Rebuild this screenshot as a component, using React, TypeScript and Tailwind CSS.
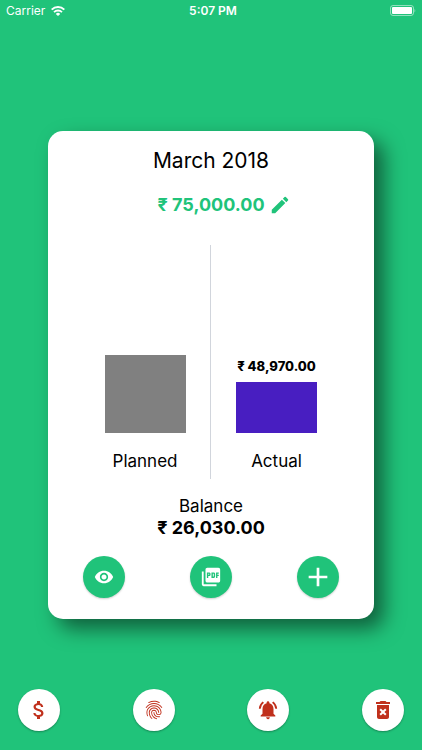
import {
  MdAdd,
  MdAttachMoney,
  MdDeleteForever,
  MdEdit,
  MdFingerprint,
  MdNotificationsActive,
  MdPictureAsPdf,
  MdVisibility,
} from 'react-icons/md';

const bars = [
  { label: 'Planned', amount: '', height: 78, color: 'bg-[#808080]' },
  { label: 'Actual', amount: '₹ 48,970.00', height: 51, color: 'bg-[#481ec1]' },
];

const cardActions = [
  { label: 'View expenses', icon: <MdVisibility size={20} /> },
  { label: 'Export PDF', icon: <MdPictureAsPdf size={22} /> },
  { label: 'Add expense', icon: <MdAdd size={32} /> },
];

const navActions = [
  { label: 'Currency', icon: <MdAttachMoney size={24} /> },
  { label: 'Fingerprint lock', icon: <MdFingerprint size={22} /> },
  { label: 'Reminders', icon: <MdNotificationsActive size={22} /> },
  { label: 'Delete all', icon: <MdDeleteForever size={24} /> },
];

function StatusBar() {
  return (
    <header className="grid h-[22px] grid-cols-3 items-center px-[6px] text-[12px] text-white">
      <div className="flex items-center gap-[6px]">
        <span>Carrier</span>
        <svg width="14" height="10" viewBox="0 0 14 10" fill="none" aria-label="Wi-Fi">
          <path d="M.7 3.6a9 9 0 0 1 12.6 0" stroke="currentColor" strokeWidth="2" />
          <path d="M3 6.1a5.8 5.8 0 0 1 8 0" stroke="currentColor" strokeWidth="1.8" />
          <path d="M7 10 4.8 7.9a3.2 3.2 0 0 1 4.4 0z" fill="currentColor" />
        </svg>
      </div>
      <span className="pl-1 text-center font-semibold">5:07 PM</span>
      <svg className="justify-self-end" width="26" height="12" viewBox="0 0 26 12" fill="none" aria-label="Battery full">
        <rect x="0.5" y="0.5" width="23" height="10" rx="2.5" stroke="#fff" strokeOpacity="0.5" />
        <rect x="2" y="2" width="20" height="7" rx="1" fill="#fff" />
        <path d="M24.5 4v3.5c1-.4 1.2-3.1 0-3.5z" fill="#fff" fillOpacity="0.5" />
      </svg>
    </header>
  );
}

export default function App() {
  return (
    <div className="flex min-h-screen flex-col bg-[#20c37a] font-['Inter','Noto_Sans',sans-serif] text-black">
      <StatusBar />

      <main className="flex flex-1 flex-col justify-center px-12 pt-[38px]">
        <section className="rounded-[15px] bg-white pt-4 pb-[21px] shadow-[10px_10px_20px_rgba(0,0,0,0.5)]">
          <h1 className="text-center text-[21px] leading-7">March 2018</h1>

          {/* Income */}
          <div className="mt-4 flex h-7 items-center justify-center gap-1 pl-[26px] text-[#20c37a]">
            <span className="text-[18px] font-bold">₹ 75,000.00</span>
            <button type="button" aria-label="Edit income">
              <MdEdit size={22} />
            </button>
          </div>

          {/* Chart */}
          <div className="mt-[26px] grid grid-cols-2 divide-x divide-gray-300 px-8">
            {bars.map((bar) => (
              <div key={bar.label} className="flex h-[234px] flex-col items-center justify-end pb-[6px]">
                <span className="mb-2 text-[13px] leading-4 font-extrabold whitespace-nowrap">{bar.amount}</span>
                <div className={`w-[81px] ${bar.color}`} style={{ height: bar.height }} />
                <span className="mt-4 text-[17px] leading-6">{bar.label}</span>
              </div>
            ))}
          </div>

          {/* Balance */}
          <div className="mt-[17px] text-center leading-[21px]">
            <p className="text-[17px]">Balance</p>
            <p className="text-[18px] font-bold">₹ 26,030.00</p>
          </div>

          <div className="mt-[18px] flex justify-between px-[35px]">
            {cardActions.map((action) => (
              <button
                key={action.label}
                type="button"
                aria-label={action.label}
                className="flex size-[42px] items-center justify-center rounded-full bg-[#20c37a] text-white shadow-[0_1px_2px_rgba(0,0,0,0.2)]"
              >
                {action.icon}
              </button>
            ))}
          </div>
        </section>
      </main>

      <nav className="flex justify-between px-[18px] pb-[19px]">
        {navActions.map((action) => (
          <button
            key={action.label}
            type="button"
            aria-label={action.label}
            className="flex size-[42px] items-center justify-center rounded-full bg-white text-[#c0301c] shadow-[0_1px_2px_rgba(0,0,0,0.3)]"
          >
            {action.icon}
          </button>
        ))}
      </nav>
    </div>
  );
}
